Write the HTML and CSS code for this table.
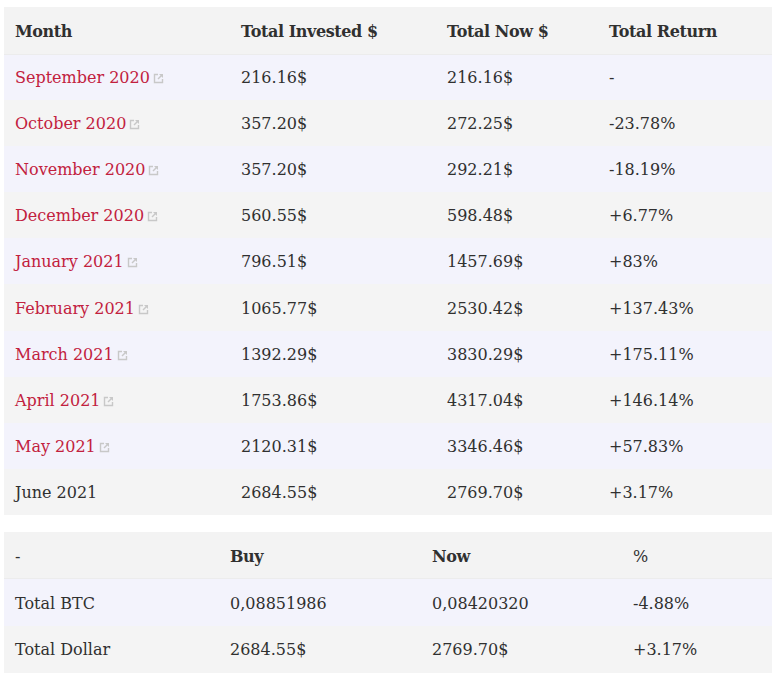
FILE: index.html
```html
<!DOCTYPE html>
<html>
<head>
<meta charset="utf-8">
<link rel="stylesheet" href="styles.css">
</head>
<body>
<main class="page">
<table class="tbl tbl-months">
  <colgroup><col class="c1"><col class="c2"><col class="c3"><col class="c4"></colgroup>
  <thead>
    <tr><th>Month</th><th>Total Invested $</th><th>Total Now $</th><th>Total Return</th></tr>
  </thead>
  <tbody>
    <tr><td><a class="ext" href="#">September 2020</a></td><td>216.16$</td><td>216.16$</td><td>-</td></tr>
    <tr><td><a class="ext" href="#">October 2020</a></td><td>357.20$</td><td>272.25$</td><td>-23.78%</td></tr>
    <tr><td><a class="ext" href="#">November 2020</a></td><td>357.20$</td><td>292.21$</td><td>-18.19%</td></tr>
    <tr><td><a class="ext" href="#">December 2020</a></td><td>560.55$</td><td>598.48$</td><td>+6.77%</td></tr>
    <tr><td><a class="ext" href="#">January 2021</a></td><td>796.51$</td><td>1457.69$</td><td>+83%</td></tr>
    <tr><td><a class="ext" href="#">February 2021</a></td><td>1065.77$</td><td>2530.42$</td><td>+137.43%</td></tr>
    <tr><td><a class="ext" href="#">March 2021</a></td><td>1392.29$</td><td>3830.29$</td><td>+175.11%</td></tr>
    <tr><td><a class="ext" href="#">April 2021</a></td><td>1753.86$</td><td>4317.04$</td><td>+146.14%</td></tr>
    <tr><td><a class="ext" href="#">May 2021</a></td><td>2120.31$</td><td>3346.46$</td><td>+57.83%</td></tr>
    <tr><td>June 2021</td><td>2684.55$</td><td>2769.70$</td><td>+3.17%</td></tr>
  </tbody>
</table>
<table class="tbl tbl-totals">
  <colgroup><col class="d1"><col class="d2"><col class="d3"><col class="d4"></colgroup>
  <thead>
    <tr><th class="plain">-</th><th>Buy</th><th>Now</th><th class="plain">%</th></tr>
  </thead>
  <tbody>
    <tr><td>Total BTC</td><td>0,08851986</td><td>0,08420320</td><td>-4.88%</td></tr>
    <tr><td>Total Dollar</td><td>2684.55$</td><td>2769.70$</td><td>+3.17%</td></tr>
  </tbody>
</table>
</main>
</body>
</html>
```
FILE: styles.css
```css
html, body { margin: 0; padding: 0; background: #fff; }
.page {
  padding: 7px 5px 0 4px;
  display: flex;
  flex-direction: column;
  gap: 17px;
  font-family: "DejaVu Serif", "Liberation Serif", serif;
  font-size: 16px;
  color: #303030;
}
.tbl {
  width: 768px;
  border-collapse: collapse;
  table-layout: fixed;
}
.tbl th, .tbl td {
  text-align: left;
  padding: 2px 0 0 11px;
  line-height: 22px;
  vertical-align: middle;
  white-space: nowrap;
}
.tbl-months tbody tr { height: 46.1px; }
.tbl-months thead tr { height: 47px; }
.tbl-totals tr { height: 47px; }
.tbl thead th {
  background: #f3f3f3;
  font-weight: bold;
  letter-spacing: -0.4px;
  padding-top: 3px;
  border-bottom: 1px solid #ececec;
}
.tbl thead th.plain { font-weight: normal; letter-spacing: 0; }
.tbl tbody tr:nth-child(odd) td { background: #f3f3fc; }
.tbl tbody tr:nth-child(even) td { background: #f4f4f4; }
.tbl-months .c1 { width: 226px; }
.tbl-months .c2 { width: 206px; }
.tbl-months .c3 { width: 162px; }
.tbl-months .c4 { width: 174px; }
.tbl-totals .d1 { width: 215px; }
.tbl-totals .d2 { width: 202px; }
.tbl-totals .d3 { width: 201px; }
.tbl-totals .d4 { width: 150px; }
a.ext {
  color: #c2213e;
  text-decoration: none;
}
a.ext::after {
  content: "";
  display: inline-block;
  width: 11px;
  height: 11px;
  margin-left: 3px;
  vertical-align: -1px;
  background:
    url("data:image/svg+xml;utf8,<svg xmlns='http://www.w3.org/2000/svg' viewBox='0 0 11 11'><path d='M5 1.5H1.5v8h8V6' fill='none' stroke='%23c8c8c8' stroke-width='1.4'/><path d='M6 1h4v4z' fill='%23c8c8c8'/><path d='M9.5 1.5L5 6' stroke='%23c8c8c8' stroke-width='1.5'/></svg>") no-repeat center / 11px 11px;
}
```
